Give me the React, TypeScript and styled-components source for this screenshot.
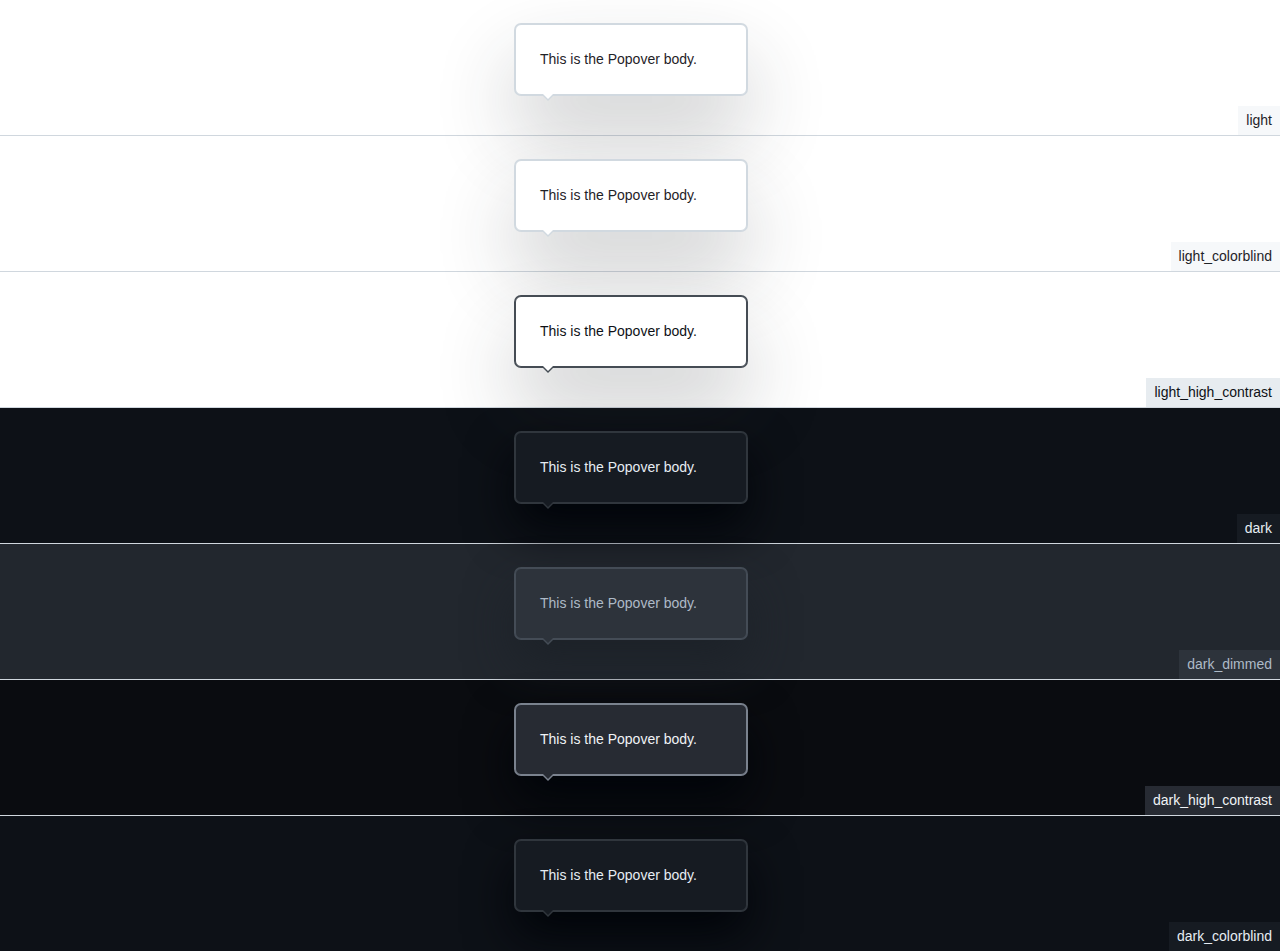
import React from "react";
import styled, { createGlobalStyle } from "styled-components";

const Global = createGlobalStyle`
  html, body { margin: 0; padding: 0; }
  body { font-family: "Liberation Sans", Arial, Helvetica, sans-serif; font-size: 14px; line-height: 1.5; }
  * { box-sizing: border-box; }
`;

type Theme = {
  name: string;
  bg: string;
  overlay: string;
  border: string;
  fg: string;
  labelBg: string;
  labelFg: string;
  shadow: string;
};

const lightShadow = "0 40px 80px rgba(37,41,46,0.24)";
const darkShadow = "0 24px 48px #010409";

const themes: Theme[] = [
  { name: "light", bg: "#ffffff", overlay: "#ffffff", border: "#d1d9e0", fg: "#1f2328", labelBg: "#f6f8fa", labelFg: "#1f2328", shadow: lightShadow },
  { name: "light_colorblind", bg: "#ffffff", overlay: "#ffffff", border: "#d1d9e0", fg: "#1f2328", labelBg: "#f6f8fa", labelFg: "#1f2328", shadow: lightShadow },
  { name: "light_high_contrast", bg: "#ffffff", overlay: "#ffffff", border: "#454c54", fg: "#0e1116", labelBg: "#e7ecf0", labelFg: "#0e1116", shadow: lightShadow },
  { name: "dark", bg: "#0d1117", overlay: "#161b22", border: "#30363d", fg: "#e6edf3", labelBg: "#161b22", labelFg: "#e6edf3", shadow: darkShadow },
  { name: "dark_dimmed", bg: "#22272e", overlay: "#2d333b", border: "#444c56", fg: "#adbac7", labelBg: "#2d333b", labelFg: "#adbac7", shadow: "0 24px 48px rgba(28,33,40,0.9)" },
  { name: "dark_high_contrast", bg: "#0a0c10", overlay: "#272b33", border: "#7a828e", fg: "#f0f3f6", labelBg: "#272b33", labelFg: "#f0f3f6", shadow: darkShadow },
  { name: "dark_colorblind", bg: "#0d1117", overlay: "#161b22", border: "#30363d", fg: "#e6edf3", labelBg: "#161b22", labelFg: "#e6edf3", shadow: darkShadow },
];

const Page = styled.div`
  display: flex;
  flex-direction: column;
`;

const Section = styled.section<{ $bg: string }>`
  position: relative;
  height: 136px;
  background: ${(p) => p.$bg};
  border-bottom: 1px solid #d0d7de;
`;

const Message = styled.div<{ $t: Theme }>`
  position: absolute;
  top: 24px;
  left: calc(50% - 125px);
  width: 232px;
  height: 71px;
  padding: 23px 24px;
  line-height: 23px;
  font-size: 14px;
  color: ${(p) => p.$t.fg};
  background: ${(p) => p.$t.overlay};
  border: 1px solid ${(p) => p.$t.border};
  border-radius: 6px;
  box-shadow: 0 0 0 1px ${(p) => p.$t.border}, ${(p) => p.$t.shadow};
  z-index: 1;

  &::before,
  &::after {
    content: "";
    position: absolute;
    border-style: solid;
    border-color: transparent;
  }
  &::before {
    top: 100%;
    left: 25px;
    border-width: 7px 7px 0 7px;
    border-top-color: ${(p) => p.$t.border};
  }
  &::after {
    top: calc(100% - 1px);
    left: 26px;
    border-width: 6px 6px 0 6px;
    border-top-color: ${(p) => p.$t.overlay};
  }
`;

const Label = styled.div<{ $bg: string; $fg: string }>`
  position: absolute;
  right: 0;
  bottom: 0;
  padding: 4px 8px;
  line-height: 21px;
  font-size: 14px;
  background: ${(p) => p.$bg};
  color: ${(p) => p.$fg};
  z-index: 2;
`;

export default function App() {
  return (
    <>
      <Global />
      <Page>
        {themes.map((t) => (
          <Section key={t.name} $bg={t.bg}>
            <Message $t={t}>This is the Popover body.</Message>
            <Label $bg={t.labelBg} $fg={t.labelFg}>
              {t.name}
            </Label>
          </Section>
        ))}
      </Page>
    </>
  );
}
